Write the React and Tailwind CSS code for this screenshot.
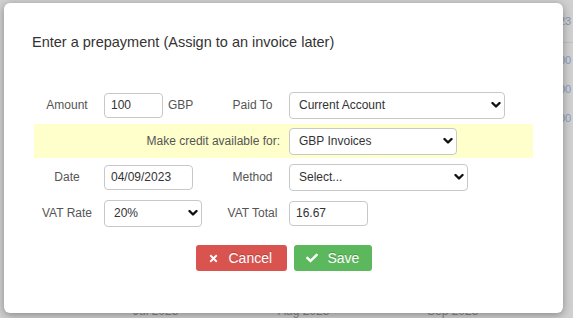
import React from 'react'
import { FaTimes, FaCheck } from 'react-icons/fa'

const Chevron = () => (
  <svg width="10" height="7" viewBox="0 0 10 7" className="absolute right-[4px] top-1/2 -translate-y-1/2 pointer-events-none">
    <polyline points="1.5,1.5 5,5 8.5,1.5" fill="none" stroke="#111" strokeWidth="2.4" strokeLinecap="round" strokeLinejoin="round" />
  </svg>
)

const Select = ({ value, width }) => (
  <div className="relative h-[27px] ml-[4px]" style={{ width }}>
    <select
      defaultValue={value}
      className="appearance-none w-full h-full rounded-[4px] border border-[#c8c8c8] bg-white pl-[9px] text-[12px] text-[#333] outline-none"
    >
      <option>{value}</option>
    </select>
    <Chevron />
  </div>
)

const Input = ({ value, width }) => (
  <input
    defaultValue={value}
    className="h-[25px] ml-[4px] rounded-[4px] border border-[#c8c8c8] bg-white pl-[6px] text-[12px] text-[#333] outline-none"
    style={{ width }}
  />
)

const Label = ({ children }) => (
  <div className="text-center text-[12px] text-[#555]">{children}</div>
)

const Row = ({ children, className = '' }) => (
  <div className={`grid grid-cols-[66px_120px_65px_1fr] items-center h-[34px] ${className}`}>
    {children}
  </div>
)

const App = () => {
  return (
    <div className="relative w-[573px] h-[318px] overflow-hidden bg-[#d0d0d0]" style={{ fontFamily: '"Liberation Sans", Arial, sans-serif' }}>
      {/* page behind the overlay */}
      <div className="absolute left-[559px] top-[13px] text-[11px] text-[#8a94a8]">23</div>
      <div className="absolute left-[555px] right-0 top-[42px] border-t border-[#bfc3c9]" />
      <div className="absolute left-[559px] top-[52px] text-[11px] text-[#8a9bbd]">00</div>
      <div className="absolute left-[559px] top-[81px] text-[11px] text-[#8a9bbd]">00</div>
      <div className="absolute left-[559px] top-[110px] text-[11px] text-[#8a9bbd]">00</div>
      <div className="absolute left-[133px] top-[304px] text-[12px] leading-[14px] text-[#888]">Jul 2023</div>
      <div className="absolute left-[278px] top-[304px] text-[12px] leading-[14px] text-[#888]">Aug 2023</div>
      <div className="absolute left-[427px] top-[304px] text-[12px] leading-[14px] text-[#888]">Sep 2023</div>

      <div className="relative pl-[4px] pt-[3px]">
        <div className="w-[559px] h-[310px] rounded-[6px] bg-white shadow-[0_2px_8px_rgba(0,0,0,0.35)] pt-[30px]">
          <h1 className="pl-[28px] text-[14.5px] leading-[18px] text-[#333]">
            Enter a prepayment (Assign to an invoice later)
          </h1>

          <div className="mt-[37px] ml-[30px] w-[499px] flex flex-col gap-[2px]">
            <Row>
              <Label>Amount</Label>
              <div className="flex items-center">
                <Input value="100" width={59} />
                <span className="ml-[5px] text-[12px] text-[#555]">GBP</span>
              </div>
              <Label>Paid To</Label>
              <Select value="Current Account" width={216} />
            </Row>
            <Row className="bg-[#ffffcc]">
              <div className="col-span-3 text-right pr-[5px] text-[12px] text-[#555]">Make credit available for:</div>
              <Select value="GBP Invoices" width={168} />
            </Row>
            <Row>
              <Label>Date</Label>
              <Input value="04/09/2023" width={89} />
              <Label>Method</Label>
              <Select value="Select..." width={179} />
            </Row>
            <Row>
              <Label>VAT Rate</Label>
              <div className="h-[26px] flex items-center">
                <Select value="20%" width={98} />
              </div>
              <Label>VAT Total</Label>
              <Input value="16.67" width={79} />
            </Row>
          </div>

          <div className="mt-[15px] flex justify-center gap-[7px]">
            <button className="flex items-center h-[26px] w-[91px] pl-[12px] rounded-[3px] bg-[#d9534f] text-white text-[14px] [text-shadow:0_-1px_0_rgba(0,0,0,0.2)]">
              <FaTimes size={11} />
              <span className="ml-[10px]">Cancel</span>
            </button>
            <button className="flex items-center h-[26px] w-[78px] pl-[12px] rounded-[3px] bg-[#5cb85c] text-white text-[14px] [text-shadow:0_-1px_0_rgba(0,0,0,0.2)]">
              <FaCheck size={12} />
              <span className="ml-[10px]">Save</span>
            </button>
          </div>
        </div>
      </div>
    </div>
  )
}

export default App
